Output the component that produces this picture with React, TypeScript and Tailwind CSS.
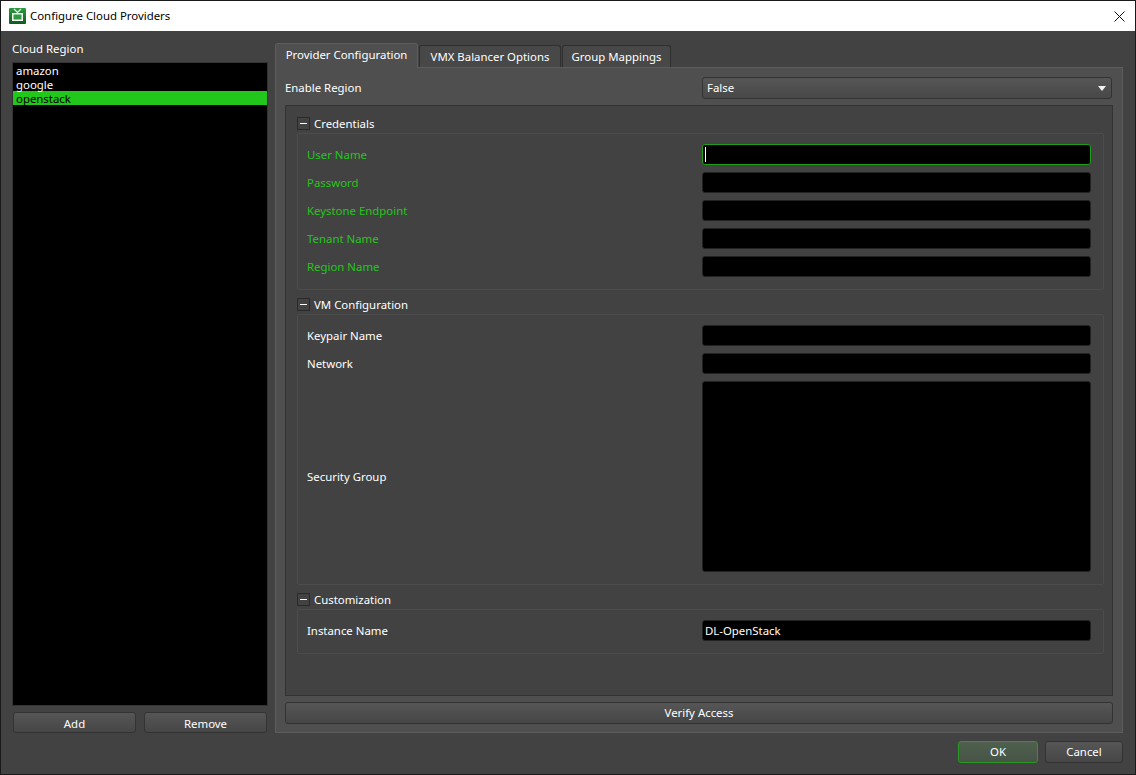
import React from 'react';

const Field = ({ label, value, green, focused, tall }: { label: string; value?: string; green?: boolean; focused?: boolean; tall?: boolean }) => (
  <div className={`flex items-center ${tall ? 'h-[191px]' : 'h-[21px]'}`}>
    <div className={`w-[395px] shrink-0 ${green ? 'text-[#22c71c]' : 'text-white'}`}>{label}</div>
    <div
      className={`h-full w-[389px] rounded-[3px] border bg-black pl-[2px] leading-[19px] text-white ${
        focused ? 'border-[#1f9c19]' : 'border-[#222222]'
      }`}
    >
      {focused && <span className="mt-[2px] block h-[15px] w-px bg-white" />}
      {value}
    </div>
  </div>
);

const Section = ({ title, children, className }: { title: string; children: React.ReactNode; className?: string }) => (
  <div className={`w-[807px] ${className ?? ''}`}>
    <div className="flex h-[17px] items-center pb-[3px] pt-[1px]">
      <div className="flex h-[13px] w-[13px] items-center justify-center border border-[#2a2a2a]">
        <div className="h-px w-[7px] bg-white" />
      </div>
      <span className="ml-[4px] text-white">{title}</span>
    </div>
    <div className="flex flex-col gap-[7px] rounded-[2px] border border-[#4c4c4c] pb-[12px] pl-[9px] pt-[10px]">{children}</div>
  </div>
);

const Button = ({ children, className }: { children: React.ReactNode; className?: string }) => (
  <button className={`rounded-[3px] border border-[#333333] bg-gradient-to-b from-[#565656] to-[#464646] text-center text-white ${className ?? ''}`}>
    {children}
  </button>
);

const App = () => {
  return (
    <div className="flex h-[775px] w-[1136px] flex-col border border-[#1a1a1a] bg-[#424242] font-['Noto_Sans',sans-serif] text-[11.4px] leading-[14px]">
      <div className="flex h-[30px] shrink-0 items-center bg-white pl-[8px] pr-[10px] text-black">
        <svg width="17" height="17" viewBox="0 0 17 17">
          <defs>
            <linearGradient id="tv" x1="0" y1="0" x2="0" y2="1">
              <stop offset="0" stopColor="#2f9a42" />
              <stop offset="1" stopColor="#0c5a20" />
            </linearGradient>
          </defs>
          <rect x="0" y="0" width="17" height="16" rx="1" fill="url(#tv)" />
          <path d="M5 1 L8.5 4.5 L12 1" stroke="#f4f8ee" strokeWidth="1.2" fill="none" />
          <rect x="3" y="5" width="11" height="8" fill="#f4f8ee" />
          <rect x="4.5" y="6.5" width="8" height="5" fill="#2f9a42" />
        </svg>
        <span className="ml-[4px] flex-1">Configure Cloud Providers</span>
        <svg width="11" height="11" viewBox="0 0 11 11">
          <path d="M0.5 0.5 L10.5 10.5 M10.5 0.5 L0.5 10.5" stroke="#111111" strokeWidth="1" />
        </svg>
      </div>

      <div className="flex flex-1 flex-col px-[11px] pt-[11px]">
        <div className="flex h-[691px] gap-[7px]">
          <div className="flex w-[256px] flex-col">
            <div className="h-[20px] text-white">Cloud Region</div>
            <div className="h-[645px] border border-[#333333] bg-black text-white">
              <div className="h-[14px] pl-[3px] pt-px">amazon</div>
              <div className="h-[14px] pl-[3px] pt-px">google</div>
              <div className="h-[14px] bg-[#22c71c] pl-[3px] pt-px text-black">openstack</div>
            </div>
            <div className="mt-[6px] flex gap-[8px] px-[1px]">
              <Button className="h-[21px] flex-1 pt-[2px]">Add</Button>
              <Button className="h-[21px] flex-1 pt-[2px]">Remove</Button>
            </div>
          </div>

          <div className="flex w-[848px] flex-col">
            <div className="flex h-[25px] items-end gap-[1px]">
              <div className="z-10 -mb-px flex h-[25px] w-[143px] items-center justify-center rounded-t-[3px] border border-b-0 border-[#5c5c5c] bg-[#4f4f4f] pb-[2px] text-white">
                Provider Configuration
              </div>
              <div className="flex h-[22px] w-[142px] items-center justify-center rounded-t-[3px] border border-b-0 border-[#2f2f2f] bg-[#484848] text-white">
                VMX Balancer Options
              </div>
              <div className="flex h-[22px] w-[109px] items-center justify-center rounded-t-[3px] border border-b-0 border-[#2f2f2f] bg-[#484848] text-white">
                Group Mappings
              </div>
            </div>
            <div className="flex h-[666px] flex-col border border-[#5c5c5c] bg-[#4f4f4f] px-[9px] pt-[9px]">
              <div className="flex h-[22px] items-center">
                <div className="w-[417px] text-white">Enable Region</div>
                <div className="flex h-full w-[410px] items-center justify-between rounded-[3px] border border-[#333333] bg-gradient-to-b from-[#565656] to-[#484848] pl-[4px] pr-[5px] text-white">
                  False
                  <svg width="8" height="5" viewBox="0 0 8 5">
                    <path d="M0 0 H8 L4 5 Z" fill="#f2f2f2" />
                  </svg>
                </div>
              </div>
              <div className="mt-[6px] h-[591px] border border-[#333333] bg-[#424242] pl-[11px] pt-[10px]">
                <Section title="Credentials">
                  <Field label="User Name" green focused />
                  <Field label="Password" green />
                  <Field label="Keystone Endpoint" green />
                  <Field label="Tenant Name" green />
                  <Field label="Region Name" green />
                </Section>
                <Section title="VM Configuration" className="mt-[7px]">
                  <Field label="Keypair Name" />
                  <Field label="Network" />
                  <Field label="Security Group" tall />
                </Section>
                <Section title="Customization" className="mt-[7px]">
                  <Field label="Instance Name" value="DL-OpenStack" />
                </Section>
              </div>
              <Button className="mt-[6px] h-[22px] w-[828px]">Verify Access</Button>
            </div>
          </div>
        </div>

        <div className="mt-[8px] flex justify-end gap-[7px] pr-[1px]">
          <button className="h-[22px] w-[80px] rounded-[3px] border border-[#2a9a24] bg-gradient-to-b from-[#4f604e] to-[#465446] text-center text-white">OK</button>
          <Button className="h-[22px] w-[78px]">Cancel</Button>
        </div>
      </div>
    </div>
  );
};

export default App;
